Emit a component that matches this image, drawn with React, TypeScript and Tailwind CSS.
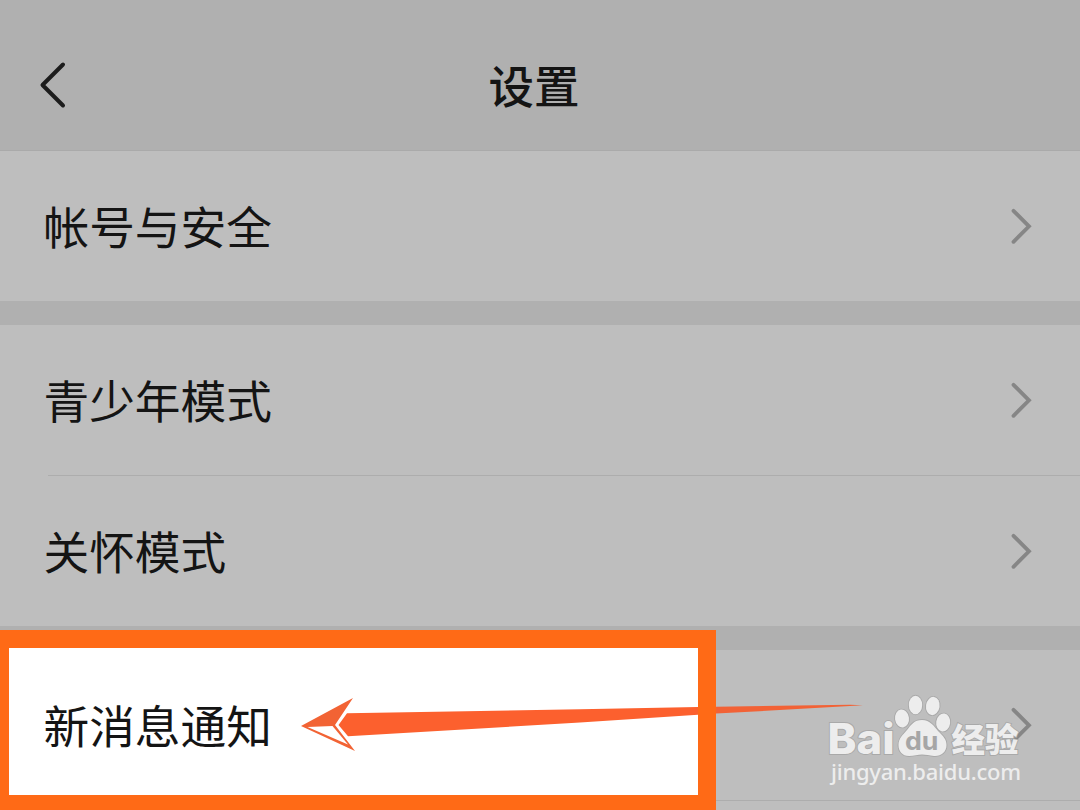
import clsx from "clsx";

const textFont = "font-['Noto_Sans_CJK_SC',sans-serif]";

function BackIcon() {
  return (
    <svg className="h-[50px] w-[30px]" viewBox="0 0 30 50" fill="none">
      <path
        d="M25 4.5 L4.5 25 L25 45.5"
        stroke="#1c1c1c"
        strokeWidth="4"
        strokeLinecap="round"
        strokeLinejoin="round"
      />
    </svg>
  );
}

function ArrowIcon() {
  return (
    <svg className="h-[38px] w-6" viewBox="0 0 24 38" fill="none">
      <path
        d="M3.5 3.8 L19 19.3 L3.5 34.8"
        stroke="#868686"
        strokeWidth="3.8"
        strokeLinecap="round"
      />
    </svg>
  );
}

interface RowProps {
  label?: string;
}

function Row({ label }: RowProps) {
  return (
    <div className="flex h-[150px] shrink-0 items-center pr-[46px] pl-[43.5px]">
      {label && <span className="pb-0.5 text-[45.7px] leading-[60px]">{label}</span>}
      <div className="ml-auto">
        <ArrowIcon />
      </div>
    </div>
  );
}

// Pointer from the right side to the highlighted row, the frame lies over its shaft
function Pointer() {
  return (
    <svg className="absolute top-[690px] left-[290px] h-[70px] w-[580px]" viewBox="290 690 580 70">
      <path
        d="M347 713.3 L580 709.3 L698 707 L698 714.8 L580 722.5 L348 736.2 L338.5 725 Z"
        fill="#fc602e"
      />
      <path d="M716 706.8 L850 704.8 L863 705.2 L850 706 L716 713.6 Z" fill="#f26236" />
      <path d="M301 726 L353 698 L335 725 L355 751 Z" fill="#f26334" />
      <path d="M307.5 727 L332.5 726 L348 744.5 Z" fill="#fff" />
    </svg>
  );
}

function Watermark() {
  return (
    <svg
      className="absolute top-[690px] left-[820px] h-[100px] w-[210px] opacity-95"
      viewBox="820 690 210 100"
      fill="#f0f0f0"
    >
      <g stroke="#a8a8a8" strokeWidth="1.8" paintOrder="stroke">
        <ellipse cx="902" cy="718.5" rx="7" ry="9" transform="rotate(-8 902 718.5)" />
        <ellipse cx="915.5" cy="705" rx="6.7" ry="9.3" />
        <ellipse cx="932.8" cy="706" rx="6.8" ry="9.2" transform="rotate(8 932.8 706)" />
        <ellipse cx="943.2" cy="722.5" rx="7" ry="9" transform="rotate(8 943.2 722.5)" />
        <path d="M922 720 C930 720 934 726 938 731 C943 736 946.5 739 946.5 745 C946.5 752 941 756.5 934 756 C929 755.5 926 754.5 922 754.5 C918 754.5 914 756 909 756 C902 756 898.5 751 898.5 745 C898.5 738 903 735 907 730 C911 725 914 720 922 720 Z" />
        <text
          x="827.5"
          y="754"
          fontSize="42"
          fontWeight="800"
          fontFamily="Inter, sans-serif"
          textLength="67"
          lengthAdjust="spacingAndGlyphs"
        >
          Bai
        </text>
        <text
          x="951.5"
          y="751.5"
          fontSize="33.5"
          fontWeight="900"
          fontFamily="Noto Sans CJK SC, sans-serif"
          textLength="67"
          lengthAdjust="spacingAndGlyphs"
        >
          经验
        </text>
      </g>
      <text
        x="905"
        y="750.3"
        fontSize="25"
        fontWeight="700"
        fill="#a5a5a5"
        fontFamily="Inter, sans-serif"
        textLength="33.5"
        lengthAdjust="spacingAndGlyphs"
      >
        du
      </text>
      <text x="831" y="780" fontSize="22" fontWeight="500" fontFamily="Noto Sans, sans-serif" textLength="190">
        jingyan.baidu.com
      </text>
    </svg>
  );
}

export default function App() {
  return (
    <div
      className={clsx(
        "relative flex h-[810px] w-[1080px] flex-col overflow-hidden bg-[#b0b0b0] text-[#141414]",
        textFont
      )}
    >
      <header className="grid h-[151px] shrink-0 grid-cols-[1fr_auto_1fr] items-center border-b border-[#aaa] pt-5 pr-[50px] pl-[38px]">
        <BackIcon />
        <h1 className="pb-0.5 text-[45.5px] leading-[60px] font-medium">设置</h1>
      </header>

      <main className="flex flex-col gap-6">
        <section className="bg-[#bebebe]">
          <Row label="帐号与安全" />
        </section>
        <section className="bg-[#bebebe]">
          <Row label="青少年模式" />
          <div className="ml-12 h-px bg-[#adadad]" />
          <Row label="关怀模式" />
        </section>
        <section className="bg-[#bebebe]">
          <Row />
          <div className="ml-12 h-px bg-[#adadad]" />
          <div className="h-[9px]" />
        </section>
      </main>

      <div className="absolute top-[630px] left-0 flex h-[180px] w-[716px] items-center border-t-[18px] border-r-[18px] border-b-[15px] border-l-[9px] border-[#ff6a16] bg-white pl-[34.5px]">
        <span className="pt-1 text-[45.7px] leading-[60px]">新消息通知</span>
      </div>
      <Pointer />
      <Watermark />
    </div>
  );
}
